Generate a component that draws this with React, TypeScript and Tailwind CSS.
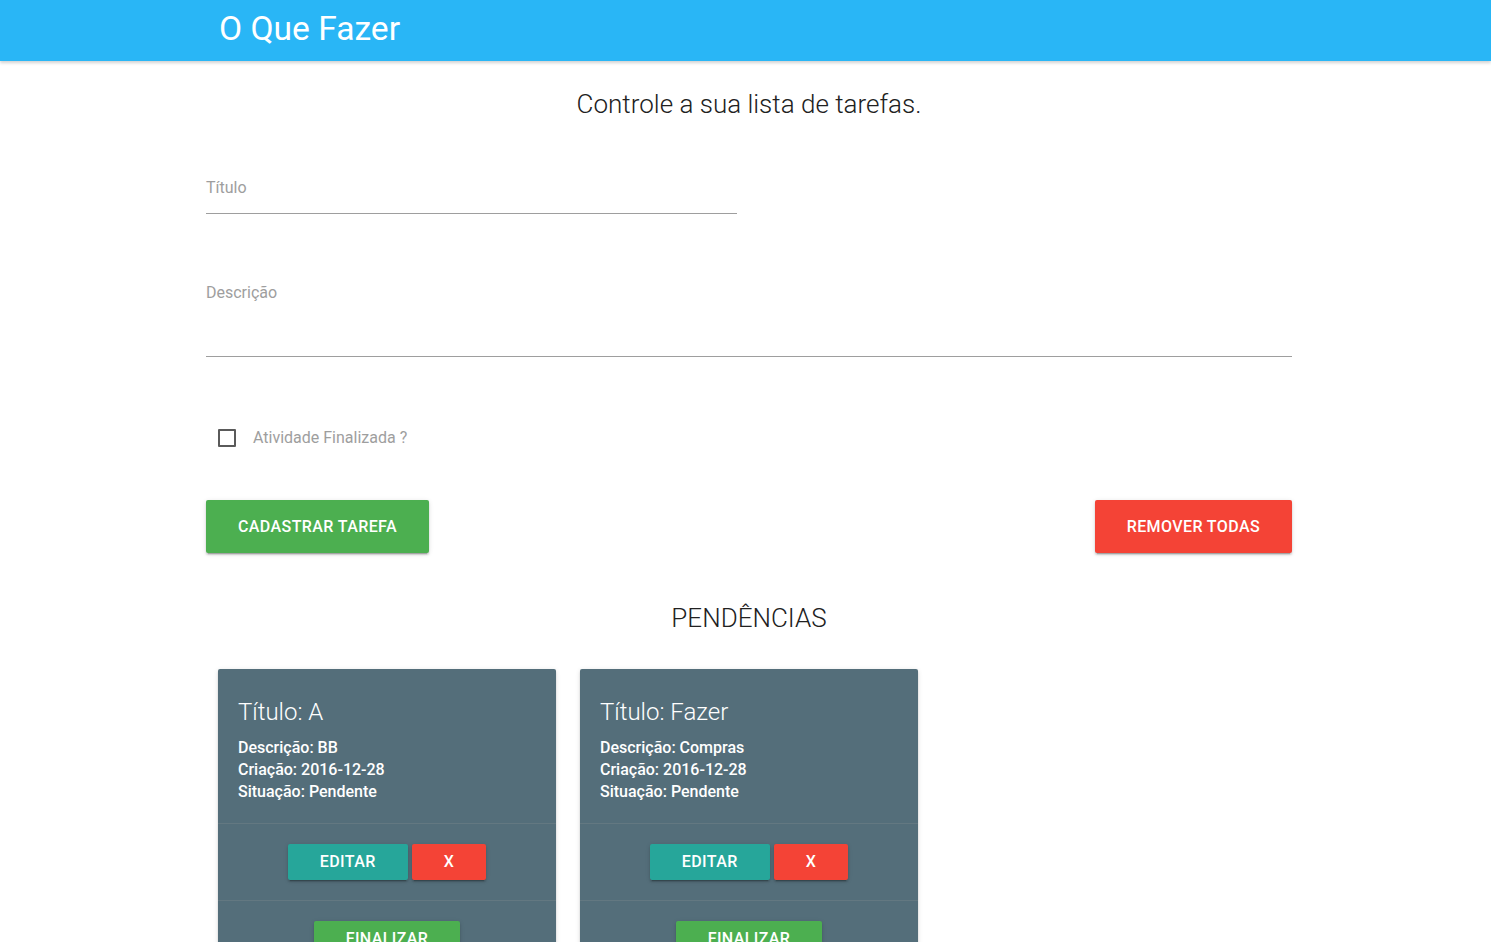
const tasks = [
  { id: 1, titulo: "A", descricao: "BB", criacao: "2016-12-28", situacao: "Pendente" },
  { id: 2, titulo: "Fazer", descricao: "Compras", criacao: "2016-12-28", situacao: "Pendente" },
];

const btnShadow = "shadow-[0_2px_2px_0_rgba(0,0,0,0.14),0_1px_5px_0_rgba(0,0,0,0.12),0_3px_1px_-2px_rgba(0,0,0,0.2)]";

function TaskCard({ t }: { t: (typeof tasks)[number] }) {
  return (
    <div className="px-3">
      <div className={`bg-[#546e7a] rounded-[2px] text-white ${btnShadow}`}>
        <div className="px-5 pt-[25px] pb-5">
          <div className="text-[24px] font-light leading-[36px] mb-[7px]">Título: {t.titulo}</div>
          <p className="text-[16px] font-medium leading-[22px]">Descrição: {t.descricao}</p>
          <p className="text-[16px] font-medium leading-[22px]">Criação: {t.criacao}</p>
          <p className="text-[16px] font-medium leading-[22px]">Situação: {t.situacao}</p>
        </div>
        <div className="border-t border-[rgba(160,160,160,0.2)] py-5 flex justify-center gap-1">
          <button className={`h-9 px-8 rounded-[2px] bg-[#26a69a] text-[16px] tracking-[0.4px] font-medium uppercase ${btnShadow}`}>Editar</button>
          <button className={`h-9 px-8 rounded-[2px] bg-[#f44336] text-[16px] tracking-[0.4px] font-medium uppercase ${btnShadow}`}>X</button>
        </div>
        <div className="border-t border-[rgba(160,160,160,0.2)] pt-5 pb-5 flex justify-center">
          <button className={`h-9 px-8 rounded-[2px] bg-[#4caf50] text-[16px] tracking-[0.4px] font-medium uppercase ${btnShadow}`}>Finalizar</button>
        </div>
      </div>
    </div>
  );
}

export default function App() {
  return (
    <div className="min-h-screen bg-white text-[#212121]" style={{ fontFamily: "Roboto, 'Noto Sans', sans-serif" }}>
      <nav className="h-[61px] bg-[#29b6f6] shadow-[0_2px_3px_0_rgba(0,0,0,0.18)] relative z-10">
        <div className="ml-[219px] text-white text-[33.6px] leading-[57px]">O Que Fazer</div>
      </nav>

      <main className="ml-[206px] w-[1086px]">
        <h4 className="mt-[25px] text-center text-[26px] font-light leading-9">Controle a sua lista de tarefas.</h4>

        {/* form */}
        <div className="mt-[56px] w-[531px]">
          <label className="block text-[16px] leading-5 text-[#9e9e9e]">Título</label>
          <div className="h-[16px] border-b border-[#9e9e9e]" />
        </div>

        <div className="mt-[69px]">
          <label className="block text-[16px] leading-5 text-[#9e9e9e]">Descrição</label>
          <div className="h-[54px] border-b border-[#9e9e9e]" />
        </div>

        <div className="mt-[72px] ml-3 flex items-center h-[18px]">
          <span className="w-[18px] h-[18px] border-2 border-[#5a5a5a] rounded-[1px]" />
          <span className="ml-[17px] text-[16px] text-[#9e9e9e]">Atividade Finalizada ?</span>
        </div>

        <div className="mt-[53px] flex justify-between">
          <button className={`h-[53px] px-8 rounded-[2px] bg-[#4caf50] text-white text-[16px] tracking-[0.4px] font-medium uppercase ${btnShadow}`}>Cadastrar Tarefa</button>
          <button className={`h-[53px] px-8 rounded-[2px] bg-[#f44336] text-white text-[16px] tracking-[0.4px] font-medium uppercase ${btnShadow}`}>Remover Todas</button>
        </div>

        <h4 className="mt-[47px] text-center text-[26px] font-light leading-9">PENDÊNCIAS</h4>

        <div className="mt-[33px] grid grid-cols-3">
          {tasks.map((t) => (
            <TaskCard key={t.id} t={t} />
          ))}
        </div>
      </main>
    </div>
  );
}
